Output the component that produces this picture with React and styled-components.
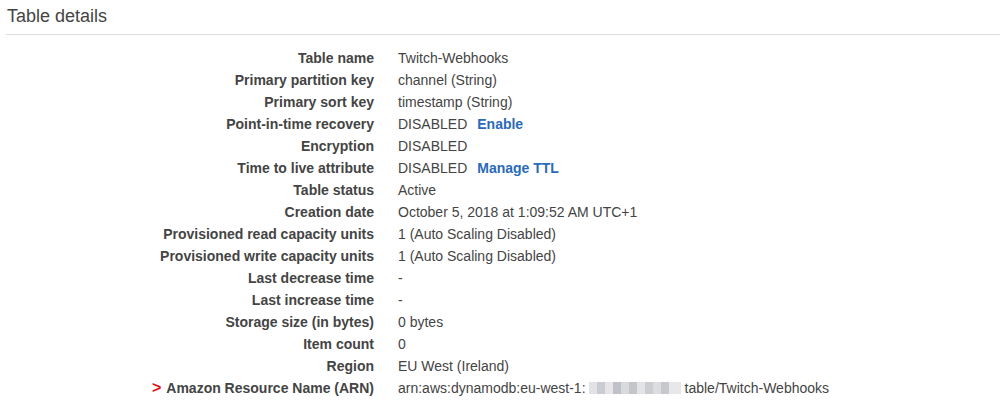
import React from 'react';
import styled, { createGlobalStyle } from 'styled-components';

const Global = createGlobalStyle`
  body {
    margin: 0;
    background: #fff;
    font-family: 'Liberation Sans', Arial, sans-serif;
  }
`;

const Panel = styled.div`
  padding-left: 6px;
`;

const Header = styled.h2`
  margin: 0;
  height: 35px;
  padding: 6px 0 0 1px;
  box-sizing: border-box;
  font-size: 18px;
  font-weight: normal;
  color: #444;
  border-bottom: 1px solid #ddd;
`;

const Details = styled.div`
  display: grid;
  grid-template-columns: 368px 1fr;
  column-gap: 24px;
  margin-top: 12px;
  font-size: 14px;
  line-height: 22px;
`;

const Label = styled.div`
  text-align: right;
  font-weight: bold;
  color: #444;
  white-space: nowrap;
`;

const Value = styled.div`
  color: #444;
  white-space: nowrap;
`;

const Link = styled.a`
  color: #2a6ab8;
  font-weight: bold;
  text-decoration: none;
  margin-left: 10px;
  cursor: pointer;
`;

const Marker = styled.span`
  color: #e4101a;
  font-weight: bold;
  font-size: 16px;
  margin-right: 5px;
`;

const Redacted = styled.span`
  display: inline-block;
  width: 92px;
  height: 12px;
  margin: 0 4px 0 3px;
  vertical-align: -1px;
  background:
    linear-gradient(90deg,
      #e2e2e4 0 8px, #c9ccd2 8px 16px, #e6e6e6 16px 24px, #bfc2c8 24px 32px,
      #d9dadd 32px 40px, #c3c5c9 40px 48px, #e3e3e5 48px 56px, #cbcdd1 56px 64px,
      #dcdde0 64px 72px, #c6c8cc 72px 80px, #e8e8ea 80px 92px);
  filter: blur(0.6px);
`;

const rows = [
  ['Table name', 'Twitch-Webhooks'],
  ['Primary partition key', 'channel (String)'],
  ['Primary sort key', 'timestamp (String)'],
  ['Point-in-time recovery', <>DISABLED<Link>Enable</Link></>],
  ['Encryption', 'DISABLED'],
  ['Time to live attribute', <>DISABLED<Link>Manage TTL</Link></>],
  ['Table status', 'Active'],
  ['Creation date', 'October 5, 2018 at 1:09:52 AM UTC+1'],
  ['Provisioned read capacity units', '1 (Auto Scaling Disabled)'],
  ['Provisioned write capacity units', '1 (Auto Scaling Disabled)'],
  ['Last decrease time', '-'],
  ['Last increase time', '-'],
  ['Storage size (in bytes)', '0 bytes'],
  ['Item count', '0'],
  ['Region', 'EU West (Ireland)'],
  [
    <><Marker>&gt;</Marker>Amazon Resource Name (ARN)</>,
    <>arn:aws:dynamodb:eu-west-1:<Redacted />table/Twitch-Webhooks</>,
  ],
];

export default function App() {
  return (
    <>
      <Global />
      <Panel>
        <Header>Table details</Header>
        <Details>
          {rows.map(([label, value], i) => (
            <React.Fragment key={i}>
              <Label>{label}</Label>
              <Value>{value}</Value>
            </React.Fragment>
          ))}
        </Details>
      </Panel>
    </>
  );
}
